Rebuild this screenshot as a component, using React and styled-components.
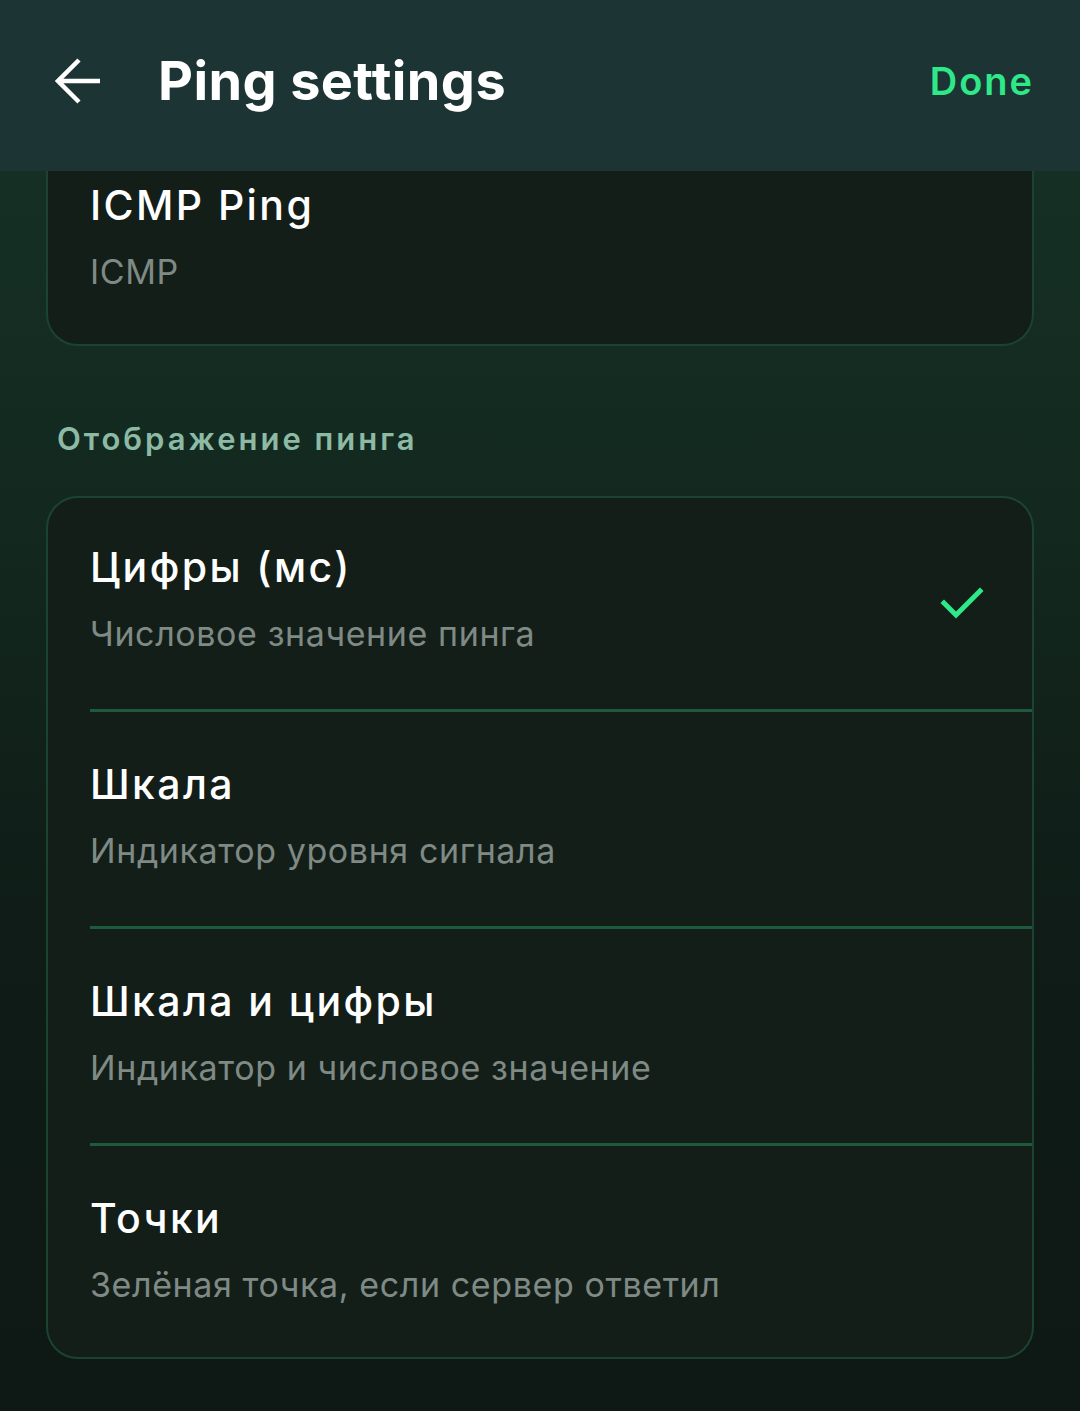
import React from 'react';
import styled, { createGlobalStyle } from 'styled-components';

const GlobalStyle = createGlobalStyle`
  html, body {
    margin: 0;
    padding: 0;
  }
  body {
    background: #0e1814;
    font-family: 'Inter', 'Noto Sans', sans-serif;
  }
`;

const Page = styled.div`
  width: 1080px;
  height: 1411px;
  overflow: hidden;
  background: linear-gradient(180deg, #173329 0%, #13291f 35%, #0f1c17 65%, #0e1814 100%);
`;

const Header = styled.header`
  position: relative;
  z-index: 2;
  height: 171px;
  background: #1c3433;
  display: flex;
  align-items: center;
  padding: 0 46px 10px 54px;
  box-sizing: border-box;
`;

const BackButton = styled.button`
  border: 0;
  background: none;
  padding: 0;
  width: 50px;
  height: 50px;
  display: flex;
  align-items: center;
  justify-content: center;
  color: #ffffff;
  cursor: pointer;
`;

const Title = styled.h1`
  margin: 0 0 0 54px;
  flex: 1;
  color: #ffffff;
  font-size: 54px;
  font-weight: 700;
  letter-spacing: 0.4px;
  line-height: 60px;
`;

const DoneButton = styled.button`
  border: 0;
  background: none;
  padding: 0;
  color: #2ee88a;
  font-family: inherit;
  font-size: 38px;
  font-weight: 600;
  letter-spacing: 2px;
  line-height: 44px;
  cursor: pointer;
`;

const Content = styled.main`
  margin-top: -37px;
  padding: 0 46px;
  display: flex;
  flex-direction: column;
`;

const Card = styled.section`
  background: #131e19;
  border: 2px solid #1b4430;
  border-radius: 32px;
  overflow: hidden;
`;

const SectionLabel = styled.div`
  margin: 73px 0 37px 11px;
  color: #8dbaa5;
  font-size: 31px;
  font-weight: 600;
  letter-spacing: 3px;
  line-height: 40px;
`;

const Row = styled.div`
  display: flex;
  padding: ${(p) => (p.$first ? 44 : 47)}px 45px 0 ${(p) => (p.$divider ? 0 : 42)}px;
  margin-left: ${(p) => (p.$divider ? 42 : 0)}px;
  height: ${(p) => p.$height}px;
  box-sizing: border-box;
  border-bottom: ${(p) => (p.$divider ? '3px solid #1e5a3d' : 'none')};
`;

const RowText = styled.div`
  flex: 1;
  display: flex;
  flex-direction: column;
  gap: 21px;
`;

const RowTitle = styled.div`
  color: #ffffff;
  font-size: 41px;
  font-weight: 500;
  letter-spacing: 2.4px;
  line-height: 50px;
`;

const RowSubtitle = styled.div`
  color: #7f8a85;
  font-size: 34px;
  font-weight: 400;
  letter-spacing: 0.6px;
  line-height: 42px;
`;

const CheckWrap = styled.div`
  align-self: center;
  margin-top: -36px;
  display: flex;
`;

const CheckMark = () => (
  <svg width="48" height="48" viewBox="0 0 48 48" fill="none">
    <path d="M5 19 L17 31 L41 7" stroke="#2ee88a" strokeWidth="5" strokeLinecap="square" />
  </svg>
);

const BackArrow = () => (
  <svg width="48" height="48" viewBox="0 0 48 48" fill="none">
    <path d="M45 24 H4 M24 3 L3 24 L24 45" stroke="#ffffff" strokeWidth="4.5" />
  </svg>
);

const options = [
  { title: 'Цифры (мс)', subtitle: 'Числовое значение пинга', selected: true },
  { title: 'Шкала', subtitle: 'Индикатор уровня сигнала' },
  { title: 'Шкала и цифры', subtitle: 'Индикатор и числовое значение' },
  { title: 'Точки', subtitle: 'Зелёная точка, если сервер ответил' },
];

export default function App() {
  return (
    <Page>
      <GlobalStyle />
      <Header>
        <BackButton aria-label="Back">
          <BackArrow />
        </BackButton>
        <Title>Ping settings</Title>
        <DoneButton>Done</DoneButton>
      </Header>
      <Content>
        <Card>
          <Row $first $height={208}>
            <RowText>
              <RowTitle>ICMP Ping</RowTitle>
              <RowSubtitle>ICMP</RowSubtitle>
            </RowText>
          </Row>
        </Card>
        <SectionLabel>Отображение пинга</SectionLabel>
        <Card>
          {options.map((o, i) => {
            const first = i === 0;
            const last = i === options.length - 1;
            return (
              <Row
                key={o.title}
                $first={first}
                $divider={!last}
                $height={first ? 214 : last ? 211 : 217}
              >
                <RowText>
                  <RowTitle>{o.title}</RowTitle>
                  <RowSubtitle>{o.subtitle}</RowSubtitle>
                </RowText>
                {o.selected && (
                  <CheckWrap>
                    <CheckMark />
                  </CheckWrap>
                )}
              </Row>
            );
          })}
        </Card>
      </Content>
    </Page>
  );
}
